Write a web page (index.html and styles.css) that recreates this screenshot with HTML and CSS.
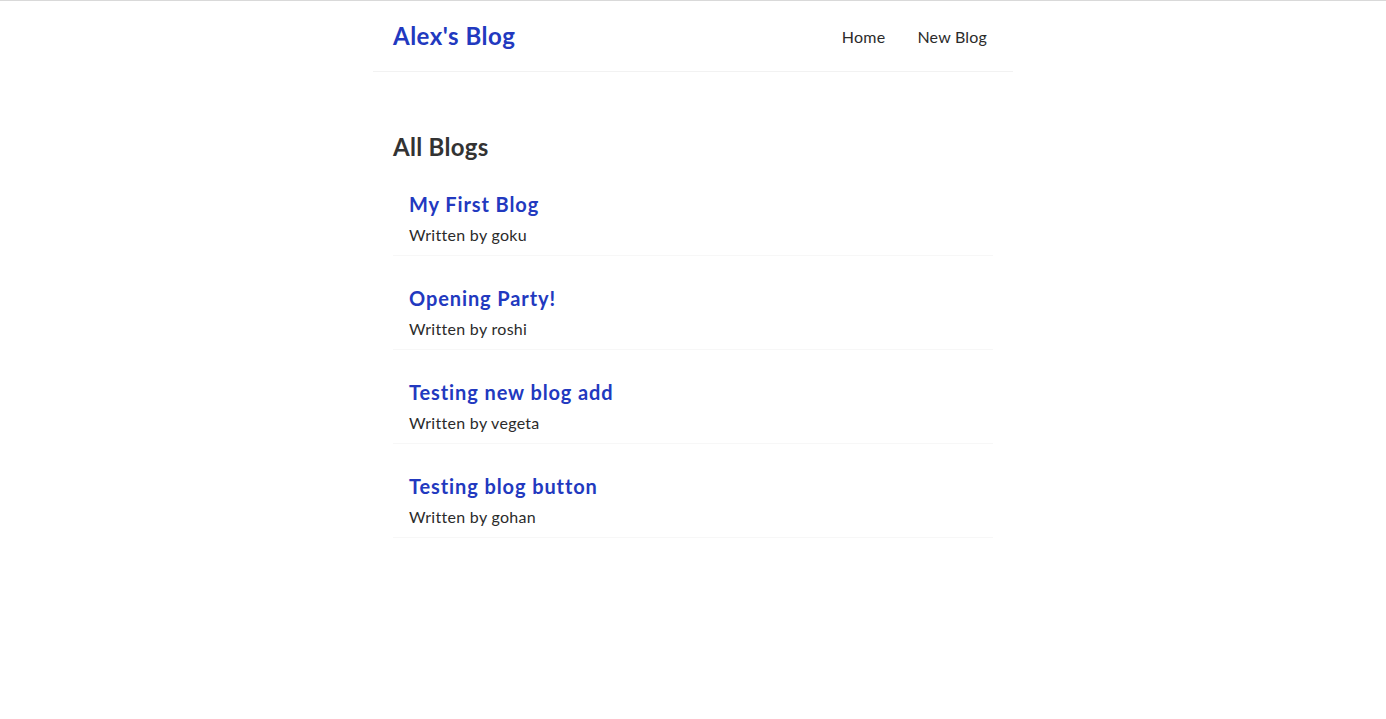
FILE: index.html
```html
<!DOCTYPE html>
<html lang="en">
<head>
<meta charset="utf-8">
<title>Alex's Blog</title>
<link rel="stylesheet" href="styles.css">
</head>
<body>
<div class="app">
  <nav class="navbar">
    <h1 class="brand">Alex's Blog</h1>
    <div class="links">
      <a href="#">Home</a>
      <a href="#">New Blog</a>
    </div>
  </nav>
  <div class="content">
    <div class="home">
      <h2 class="title">All Blogs</h2>
      <div class="blog-preview">
        <h2>My First Blog</h2>
        <p>Written by goku</p>
      </div>
      <div class="blog-preview">
        <h2>Opening Party!</h2>
        <p>Written by roshi</p>
      </div>
      <div class="blog-preview">
        <h2>Testing new blog add</h2>
        <p>Written by vegeta</p>
      </div>
      <div class="blog-preview">
        <h2>Testing blog button</h2>
        <p>Written by gohan</p>
      </div>
    </div>
  </div>
</div>
</body>
</html>
```
FILE: styles.css
```css
* {
  margin: 0;
  font-family: Lato, "Noto Sans", sans-serif;
  color: #333;
}
body {
  border-top: 1px solid #d9d9d9;
  background: #fff;
}
.navbar {
  padding: 20px;
  display: flex;
  align-items: center;
  max-width: 600px;
  margin: 0 auto;
  border-bottom: 1px solid #f2f2f2;
}
.brand {
  font-size: 24px;
  line-height: 30px;
  font-weight: 700;
  letter-spacing: 0.5px;
  color: #2239bf;
}
.links {
  margin-left: auto;
}
.links a {
  margin-left: 16px;
  text-decoration: none;
  padding: 6px;
  font-size: 16px;
  letter-spacing: 0.2px;
  color: #2b2b2b;
}
.content {
  max-width: 600px;
  margin: 40px auto;
  padding: 20px;
}
.title {
  font-size: 24px;
  line-height: 30px;
  font-weight: 700;
  letter-spacing: 0.3px;
}
.blog-preview {
  padding: 10px 16px;
  margin: 20px 0;
  border-bottom: 1px solid #f7f7f7;
}
.blog-preview h2 {
  font-size: 20px;
  line-height: 25px;
  font-weight: 700;
  letter-spacing: 0.9px;
  color: #2239bf;
  margin-bottom: 8px;
}
.blog-preview p {
  font-size: 16px;
  line-height: 20px;
  letter-spacing: 0.3px;
  color: #2b2b2b;
}
```
